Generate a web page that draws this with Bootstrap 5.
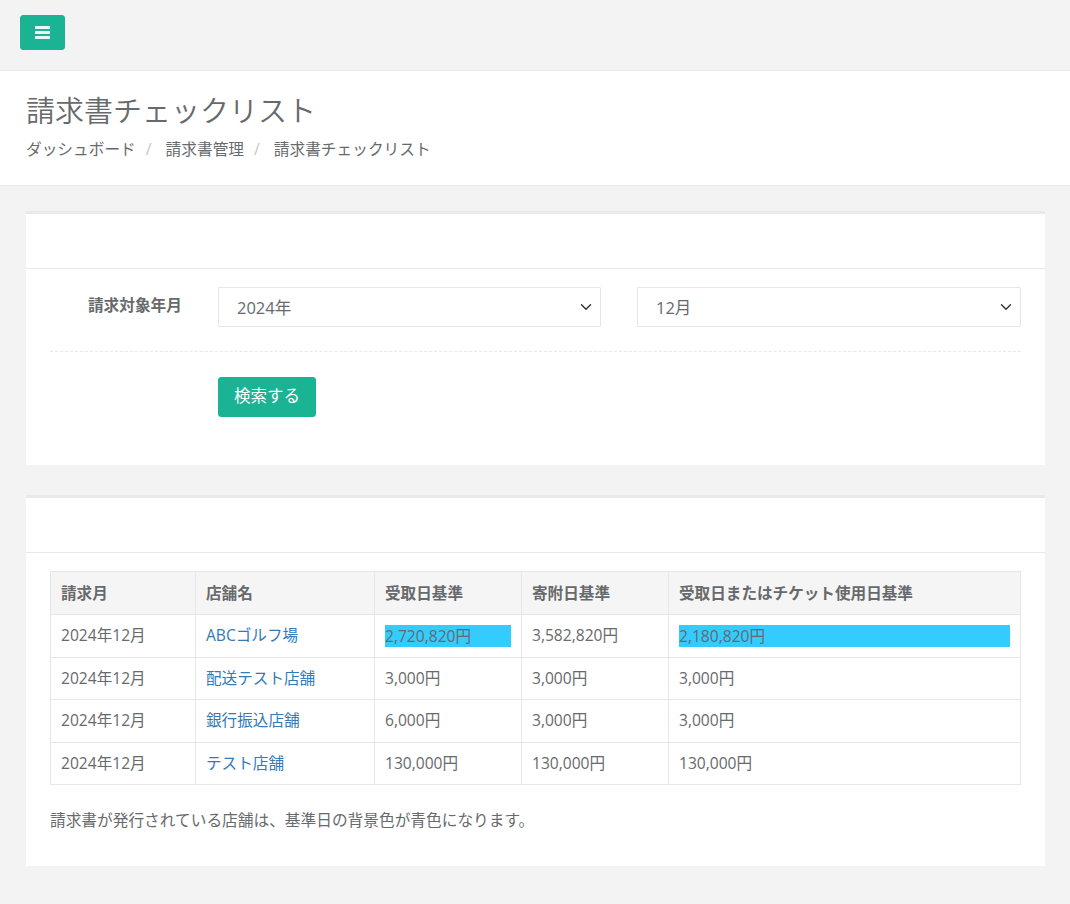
<!DOCTYPE html>
<html lang="ja">
<head>
<meta charset="utf-8">
<title>請求書チェックリスト</title>
<link href="https://cdn.jsdelivr.net/npm/bootstrap@5.3.0/dist/css/bootstrap.min.css" rel="stylesheet">
<style>
body{background:#f3f3f4;color:#676a6c;font-family:"Open Sans","Noto Sans CJK JP",sans-serif;font-size:15.7px;line-height:21.5px}
.topbar{height:71px;padding:15px 20px;border-bottom:1px solid #e7eaec}
.menu-btn{width:45px;height:35px;background:#1ab394;border:1px solid #1ab394;border-radius:3px;padding:0}
.menu-btn svg{display:block;margin:auto}
.page-head{background:#fff;height:115px;padding:22px 26px 0;border-bottom:1px solid #e7eaec}
.page-title{font-size:29px;font-weight:350;line-height:36px;margin:0 0 9px 0;color:#676a6c}
.crumbs{margin:0;font-size:15.7px;--bs-breadcrumb-item-padding-x:10px;font-weight:400;line-height:22px}
.crumbs .breadcrumb-item,.crumbs .breadcrumb-item.active{color:#676a6c}
.crumbs .breadcrumb-item+.breadcrumb-item{padding-left:10px}
.crumbs .breadcrumb-item+.breadcrumb-item::before{color:#c4c6c8;padding-right:14px}
.content-wrap{padding:25px 25px 38px 26px}
.panel-box{background:#fff;border-top:3px solid #e7eaec}
.panel-box+.panel-box{margin-top:30px}
.panel-top{height:55px;border-bottom:1px solid #e7eaec}
.panel-body-a{padding:18px 24px 48px}
.panel-body-b{padding:18px 24px 35px}
.field-label{width:132px;margin-right:36px;font-weight:700;text-align:right;padding-top:8px;line-height:21px}
.field-select{height:40px;color:#676a6c;font-size:16.5px;border:1px solid #e5e6e7;border-radius:1px;padding:1px 36px 0 18px;line-height:38px;font-weight:400;background-position:right 6px center;background-size:16px 12px}
.select-gap{gap:36px}
.select-gap .field-select:first-child{flex:0 0 383px;width:383px}
.dash-line{border-top:1px dashed #e7eaec;margin:24px 0 25px}
.search-btn{width:98px;height:40px;margin-left:168px;background:#1ab394;border:1px solid #1ab394;border-radius:3px;color:#fff;font-size:16.5px;padding:0 0 1px;display:block}
.bill-table{table-layout:fixed;margin:0;width:971px;font-size:15.6px;--bs-table-border-color:#e7e7e7;color:#676a6c;--bs-table-color:#676a6c;--bs-table-bg:transparent}
.bill-table>:not(caption)>*>*{padding:10px;font-weight:400;line-height:21.5px}
.bill-table thead th{font-weight:700;background:#f5f5f6;padding:10px;height:43px}
.c-a{width:145px}.c-b{width:179px}.c-c{width:147px}.c-d{width:147px}
.bill-table a{color:#337ab7;text-decoration:none}
.paid-cell{background:#33ccff;height:22px;line-height:22px;margin-bottom:-.5px}
.note-text{margin:24px 0 0;font-weight:400;line-height:22px}
</style>
</head>
<body>
<div class="topbar">
  <button class="menu-btn d-flex align-items-center justify-content-center" type="button" aria-label="menu">
    <svg width="15" height="13" viewBox="0 0 15 13"><rect x="0" y="0" width="15" height="3" rx=".6" fill="#e9f8f5"/><rect x="0" y="5" width="15" height="3" rx=".6" fill="#e9f8f5"/><rect x="0" y="10" width="15" height="3" rx=".6" fill="#e9f8f5"/></svg>
  </button>
</div>
<div class="page-head">
  <h2 class="page-title">請求書チェックリスト</h2>
  <ol class="breadcrumb crumbs">
    <li class="breadcrumb-item">ダッシュボード</li>
    <li class="breadcrumb-item">請求書管理</li>
    <li class="breadcrumb-item active">請求書チェックリスト</li>
  </ol>
</div>
<div class="content-wrap">
  <section class="panel-box">
    <div class="panel-top"></div>
    <div class="panel-body-a">
      <div class="d-flex">
        <label class="field-label">請求対象年月</label>
        <div class="d-flex flex-grow-1 select-gap">
          <select class="form-select field-select"><option>2024年</option></select>
          <select class="form-select field-select"><option>12月</option></select>
        </div>
      </div>
      <div class="dash-line"></div>
      <button class="btn search-btn" type="button">検索する</button>
    </div>
  </section>
  <section class="panel-box">
    <div class="panel-top"></div>
    <div class="panel-body-b">
      <table class="table table-bordered bill-table">
        <colgroup><col class="c-a"><col class="c-b"><col class="c-c"><col class="c-d"><col></colgroup>
        <thead>
          <tr><th>請求月</th><th>店舗名</th><th>受取日基準</th><th>寄附日基準</th><th>受取日またはチケット使用日基準</th></tr>
        </thead>
        <tbody>
          <tr><td>2024年12月</td><td><a href="#">ABCゴルフ場</a></td><td><div class="paid-cell">2,720,820円</div></td><td>3,582,820円</td><td><div class="paid-cell">2,180,820円</div></td></tr>
          <tr><td>2024年12月</td><td><a href="#">配送テスト店舗</a></td><td>3,000円</td><td>3,000円</td><td>3,000円</td></tr>
          <tr><td>2024年12月</td><td><a href="#">銀行振込店舗</a></td><td>6,000円</td><td>3,000円</td><td>3,000円</td></tr>
          <tr><td>2024年12月</td><td><a href="#">テスト店舗</a></td><td>130,000円</td><td>130,000円</td><td>130,000円</td></tr>
        </tbody>
      </table>
      <p class="note-text">請求書が発行されている店舗は、基準日の背景色が青色になります。</p>
    </div>
  </section>
</div>
<script src="https://cdn.jsdelivr.net/npm/bootstrap@5.3.0/dist/js/bootstrap.bundle.min.js"></script>
</body>
</html>
